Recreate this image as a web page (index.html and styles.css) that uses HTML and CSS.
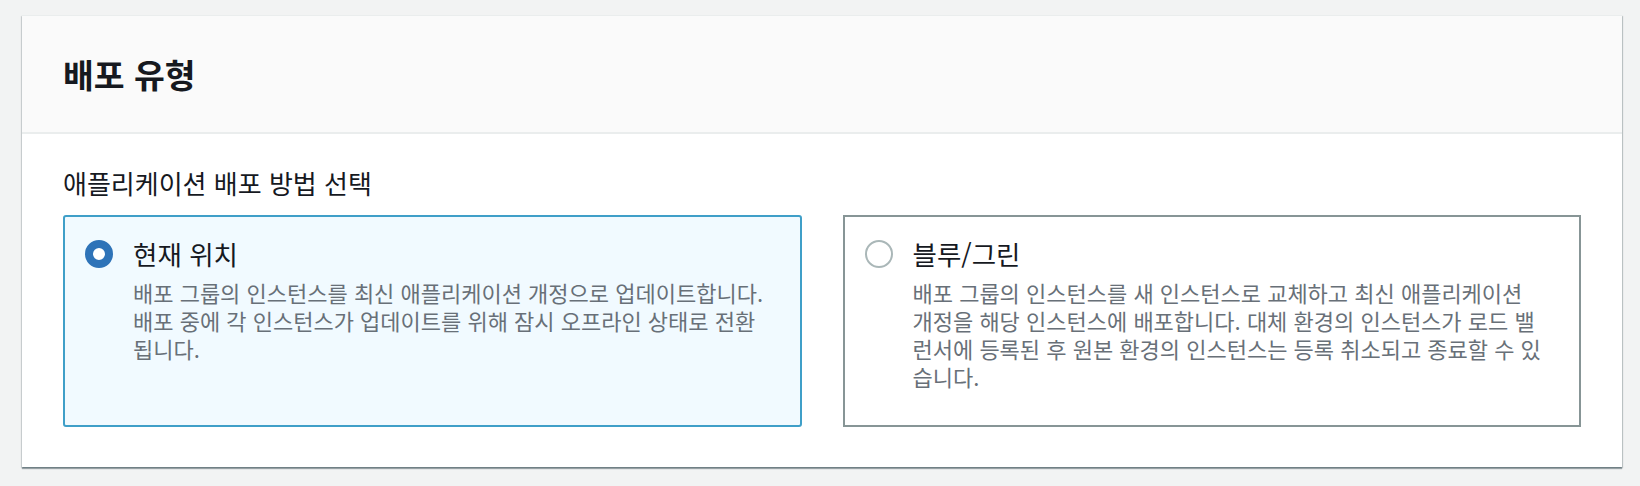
FILE: index.html
```html
<!DOCTYPE html>
<html lang="ko">
<head>
<meta charset="utf-8">
<title>배포 유형</title>
<link rel="stylesheet" href="styles.css">
</head>
<body>
<div class="page">
  <section class="container">
    <header class="container-header">
      <h2 class="container-title">배포 유형</h2>
    </header>
    <div class="container-body">
      <div class="field-label">애플리케이션 배포 방법 선택</div>
      <div class="tiles">
        <label class="tile tile-selected">
          <span class="radio radio-checked"></span>
          <span class="tile-text">
            <span class="tile-title">현재 위치</span>
            <span class="tile-desc">배포 그룹의 인스턴스를 최신 애플리케이션 개정으로 업데이트합니다.<br>배포 중에 각 인스턴스가 업데이트를 위해 잠시 오프라인 상태로 전환<br>됩니다.</span>
          </span>
        </label>
        <label class="tile">
          <span class="radio"></span>
          <span class="tile-text">
            <span class="tile-title">블루/그린</span>
            <span class="tile-desc">배포 그룹의 인스턴스를 새 인스턴스로 교체하고 최신 애플리케이션<br>개정을 해당 인스턴스에 배포합니다. 대체 환경의 인스턴스가 로드 밸<br>런서에 등록된 후 원본 환경의 인스턴스는 등록 취소되고 종료할 수 있<br>습니다.</span>
          </span>
        </label>
      </div>
    </div>
  </section>
</div>
</body>
</html>
```

FILE: styles.css
```css
html, body {
  margin: 0;
  padding: 0;
  background: #f2f3f3;
}

body {
  font-family: "Noto Sans CJK KR", "Noto Sans", sans-serif;
  color: #16191f;
}

.page {
  padding: 15px 18px 19px 22px;
}

.container {
  background: #ffffff;
  border-top: 1px solid #eaeded;
  box-shadow: 0 2px 1px 0 rgba(0, 28, 36, 0.35),
              1px 1px 1px 0 rgba(0, 28, 36, 0.18),
              -1px 1px 1px 0 rgba(0, 28, 36, 0.12);
}

.container-header {
  background: #fafafa;
  border-bottom: 2px solid #eaeded;
  padding: 38px 41px;
}

.container-title {
  margin: 0;
  font-size: 33.5px;
  line-height: 40px;
  font-weight: 700;
  color: #16191f;
}

.container-body {
  padding: 34px 41px 40px 41px;
}

.field-label {
  font-size: 26px;
  line-height: 30px;
  color: #16191f;
  margin-bottom: 17px;
}

.tiles {
  display: grid;
  grid-template-columns: 1fr 1fr;
  column-gap: 41px;
}

.tile {
  display: flex;
  align-items: flex-start;
  gap: 20px;
  padding: 20px 12px 35px 20px;
  border: 2px solid #879596;
  background: #ffffff;
}

.tile-selected {
  border-color: #3f9fc8;
  background: #f1faff;
  border-radius: 3px;
}

.radio {
  flex: 0 0 auto;
  box-sizing: border-box;
  width: 28px;
  height: 28px;
  margin-top: 3px;
  border-radius: 50%;
  border: 2px solid #aab7b8;
  background: #ffffff;
}

.radio-checked {
  border: 8px solid #2e73b8;
}

.tile-text {
  display: flex;
  flex-direction: column;
  flex: 1 1 auto;
  min-width: 0;
}

.tile-title {
  font-size: 26.5px;
  line-height: 34px;
  color: #16191f;
}

.tile-desc {
  margin-top: 7px;
  font-size: 22px;
  line-height: 28px;
  color: #687078;
}
```
